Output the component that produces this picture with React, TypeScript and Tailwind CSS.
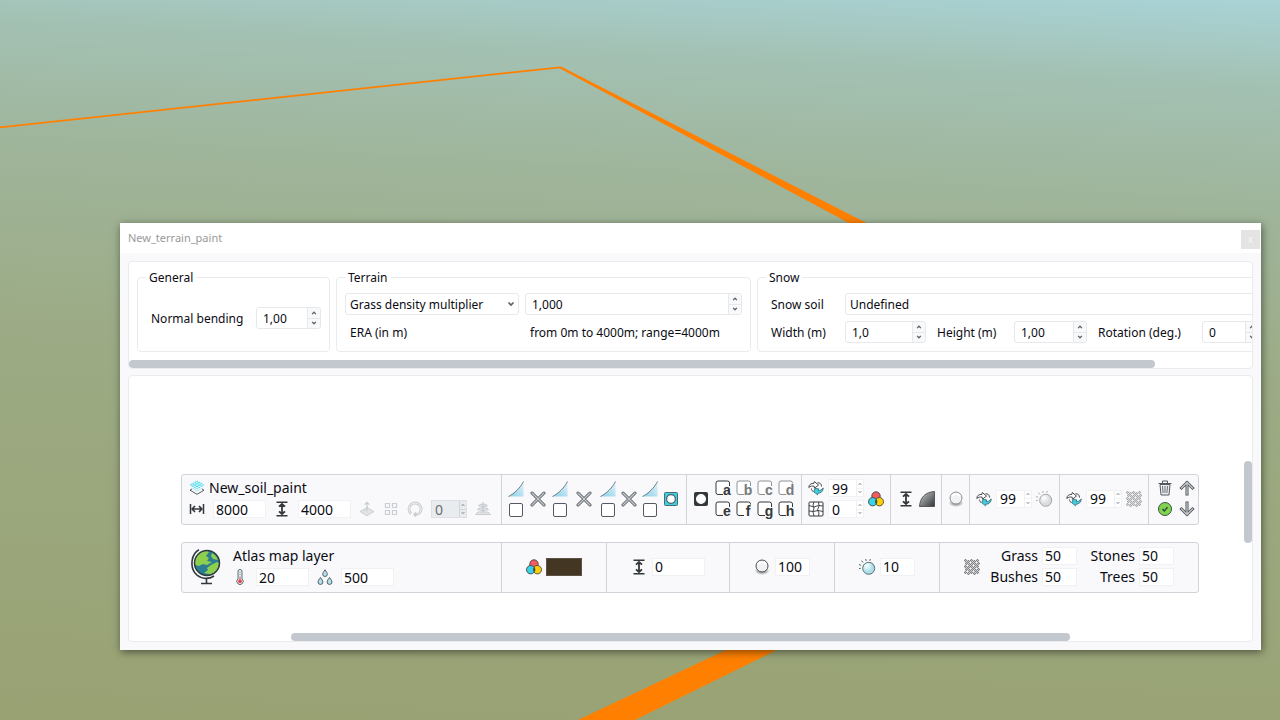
import type { ReactNode } from "react";
import clsx from "clsx";

function Icon({ size = 16, children, className }: { size?: number; children: ReactNode; className?: string }) {
  return (
    <svg width={size} height={size} viewBox="0 0 16 16" fill="none" aria-hidden="true" className={clsx("shrink-0", className)}>
      {children}
    </svg>
  );
}

function LayersIcon() {
  return (
    <Icon>
      <path d="M3 9 1 10.200 8 14.300l7-4.100L13 9" stroke="#43484c" strokeWidth=".9" />
      <path d="M8 1 15 5 8 9 1 5Z" fill="#c8f4f9" />
      <path d="M8 1 15 5 8 9 1 5ZM3.500 3.600l7 4M5.800 2.300l7 4M12.500 3.600l-7 4M10.200 2.300l-7 4" stroke="#3fd3e6" strokeWidth=".9" strokeDasharray="1.500 1" />
      <path d="m2.500 7.800 5.500 3.400 5.500-3.400" stroke="#8fdfe9" strokeWidth=".7" />
    </Icon>
  );
}

function WidthIcon() {
  return (
    <Icon>
      <path d="M1.500 3v10M14.500 3v10" stroke="#33383c" strokeWidth="1.500" />
      <path d="M3.500 8h9M6 5 3.200 8 6 11M10 5l2.800 3L10 11" stroke="#33383c" strokeWidth="1.700" />
    </Icon>
  );
}

function HeightIcon() {
  return (
    <Icon>
      <path d="M2.500 1.200h11M2.500 14.800h11" stroke="#33383c" strokeWidth="1.600" />
      <path d="M8 3v10M5 5.700 8 3l3 2.700M5 10.300 8 13l3-2.700" stroke="#33383c" strokeWidth="1.800" />
    </Icon>
  );
}

function RaiseIcon() {
  return (
    <Icon>
      <path d="M8 6.500 15 10.500 8 14.800 1 10.500Z" fill="#d8dbdf" stroke="#cdd1d5" />
      <path d="m3 9.500 7 4.200M5.500 8l7 4.200M13 9.500l-7 4.200M10.500 8l-7 4.200" stroke="#eceef0" strokeWidth=".6" />
      <path d="M8 10V1.500M5.800 3.600 8 1.400l2.200 2.200" stroke="#c6cace" strokeWidth="1.200" />
    </Icon>
  );
}

function TilesIcon() {
  return (
    <Icon>
      <path d="M2.500 2.500h4v4h-4zM9.500 2.500h4v4h-4zM2.500 9.500h4v4h-4zM9.500 9.500h4v4h-4z" stroke="#cbcfd3" strokeWidth="1.200" />
    </Icon>
  );
}

function RotateIcon() {
  return (
    <Icon>
      <path d="M4.300 12.700A6 6 0 1 1 11 13.200" stroke="#c9cdd1" strokeWidth="2.800" />
      <path d="M4.300 12.700A6 6 0 1 1 11 13.200" stroke="#f0f2f4" strokeWidth="1" />
      <path d="m6 13.200 3-2.700.4 2L12 13l-4 3z" fill="#c9cdd1" />
    </Icon>
  );
}

function StackIcon() {
  return (
    <Icon>
      <path d="M8 1v12" stroke="#c3c7cb" strokeWidth="1.200" />
      <path d="M5 3.300h6l1.500 1.500-4.500 1-4.500-1ZM4 7h8l1.500 1.500-5.500 1.200-5.500-1.200ZM3 11h10l2.500 2.500H.500Z" fill="#e4e7ea" stroke="#c3c7cb" strokeWidth=".9" />
      <path d="M8 3v9" stroke="#c3c7cb" />
    </Icon>
  );
}

function FalloffIcon() {
  return (
    <Icon>
      <defs>
        <linearGradient id="falloff" x1="0" x2="1" y1="1" y2="0">
          <stop offset=".2" stopColor="#9ad6ec" />
          <stop offset="1" stopColor="#e6f4fa" />
        </linearGradient>
      </defs>
      <path d="M.500 15.500C6.500 12.500 12.500 6.500 15.500.500v15z" fill="url(#falloff)" />
      <path d="M.500 15.500C6.500 12.500 12.500 6.500 15.500.500" stroke="#54616a" strokeWidth=".8" />
    </Icon>
  );
}

function CrossIcon() {
  return (
    <Icon>
      <path d="m2 2 12 12M14 2 2 14" stroke="#4c5156" strokeWidth="3" strokeLinecap="round" />
      <path d="m2 2 12 12M14 2 2 14" stroke="#c3c8cd" strokeWidth="1.500" strokeLinecap="round" />
    </Icon>
  );
}

function MaskIcon({ active }: { active?: boolean }) {
  return (
    <Icon>
      <rect x="1.500" y="1.500" width="13" height="13" rx="1" fill={active ? "#3ed0e0" : "#33383c"} stroke={active ? "#4a6b74" : "#33383c"} />
      <circle cx="8" cy="8" r="4.400" fill="#fff" stroke={active ? "#4f5d66" : "#fff"} strokeWidth="1.200" />
    </Icon>
  );
}

function LetterIcon({ letter, muted }: { letter: string; muted?: boolean }) {
  return (
    <Icon className="overflow-visible">
      <path d="M14.500 6V3a2 2 0 0 0-2-2H3a2 2 0 0 0-2 2v9.500a2 2 0 0 0 2 2h5" fill="#fff" stroke={muted ? "#8e9194" : "#33383c"} />
      <text
        x="12"
        y="14.500"
        textAnchor="middle"
        className="[font-family:'Liberation_Sans',sans-serif] text-[14px] font-bold [paint-order:stroke]"
        fill={muted ? "#77797b" : "#33383c"}
        stroke="#f9f9fb"
        strokeWidth="1"
      >
        {letter}
      </text>
    </Icon>
  );
}

function ShuffleIcon() {
  return (
    <Icon>
      <path d="M.800 7.500C1 4.500 3 3.200 5.800 3.500L6.300 1.500 10.500 5 6.500 8.200 6.200 6.200C4 5.800 2.500 6 .800 7.500Z" fill="#fff" stroke="#33383c" strokeWidth=".9" />
      <path d="M9.500 2.800c2.500-.3 4 1.200 4 3.700M3.500 8.500c0 1.700.6 2.600 2 3" stroke="#33383c" strokeWidth=".9" />
      <path d="M7 8.500 5.800 11.700 9.500 14.800 10 13.200c3 0 5-1.800 5.300-5.200L13 10c-1 .7-1.700.7-2.700.5L10.500 8.800Z" fill="#3ed0e0" stroke="#2f6570" strokeWidth=".8" />
    </Icon>
  );
}

function FractureIcon() {
  return (
    <Icon>
      <rect x="1" y="1" width="14" height="14" rx="1" fill="#fff" stroke="#33383c" />
      <path d="M1 4.500 6 6l4.500-1.500L15 5M1 10l4.500.5L10 9.500l5 1M6 1 5 4l1 3-1 4 1 4M10.500 1l.5 4-1.500 4 1.500 3-.5 3" stroke="#33383c" strokeWidth=".9" />
    </Icon>
  );
}

function ColorsIcon() {
  return (
    <Icon>
      <circle cx="8" cy="5" r="4.200" fill="#f45a5e" stroke="#41464a" strokeWidth=".9" />
      <circle cx="11.300" cy="10.700" r="4.200" fill="#ffd000" stroke="#41464a" strokeWidth=".9" />
      <circle cx="4.700" cy="10.700" r="4.200" fill="#39d3e8" stroke="#41464a" strokeWidth=".9" />
      <path d="M8 8.200a4 4 0 0 1 0 5 4 4 0 0 1 0-5Z" fill="#41464a" />
    </Icon>
  );
}

function CurveIcon() {
  return (
    <Icon>
      <defs>
        <linearGradient id="curve" x1="0" x2="1" y1="0" y2="1">
          <stop offset=".1" stopColor="#bfc1c3" />
          <stop offset="1" stopColor="#303336" />
        </linearGradient>
      </defs>
      <path d="M.500 15.500C1 6.500 6.500 1 15.500.500v15z" fill="url(#curve)" stroke="#4b4f53" strokeWidth=".9" />
    </Icon>
  );
}

function BallIcon({ muted }: { muted?: boolean }) {
  return (
    <Icon>
      <defs>
        <radialGradient id="ballShadow">
          <stop offset=".5" stopColor="#a9acae" />
          <stop offset="1" stopColor="#f9f9fb" />
        </radialGradient>
      </defs>
      <ellipse cx="8" cy="12" rx="7.500" ry="4" fill="url(#ballShadow)" />
      <circle cx="8" cy="7" r="6" fill="#f1f2f3" stroke={muted ? "#8f9396" : "#4b5054"} />
      <path d="M3.800 5.500a5 5 0 0 1 8.400 0" stroke="#fff" strokeWidth="1.500" />
    </Icon>
  );
}

function SunIcon({ muted }: { muted?: boolean }) {
  return (
    <Icon className="overflow-visible">
      <defs>
        <radialGradient id="sun" cx=".35" cy=".3">
          <stop offset="0" stopColor="#fff" />
          <stop offset="1" stopColor="#a9dde8" />
        </radialGradient>
        <radialGradient id="sunMuted" cx=".35" cy=".3">
          <stop offset="0" stopColor="#fff" />
          <stop offset="1" stopColor="#d9dbdd" />
        </radialGradient>
      </defs>
      <circle cx="9.700" cy="9.300" r="6" fill={muted ? "url(#sunMuted)" : "url(#sun)"} stroke={muted ? "#a2a5a8" : "#597078"} />
      <path
        d="m0 9.500 1.800-.2M0 5.500l2.200.8M2.500 1.700l1.600 1.800M6.700 0l.5 2M11.300 0l-.5 1.800"
        stroke={muted ? "#a2a5a8" : "#4b5054"}
        strokeWidth=".9"
      />
    </Icon>
  );
}

function NoiseIcon({ muted }: { muted?: boolean }) {
  return (
    <Icon>
      {[1.500, 4.500, 7.500, 10.500, 13.500].map((y, row) =>
        [1.500, 4.500, 7.500, 10.500, 13.500].map((x, column) => (
          <circle
            key={`${x}-${y}`}
            cx={x + (row % 2)}
            cy={y + (column % 2)}
            r=".9"
            fill="#fff"
            stroke={muted ? "#7b7e80" : "#3c3f41"}
            strokeWidth=".8"
          />
        ))
      )}
    </Icon>
  );
}

function TrashIcon() {
  return (
    <Icon>
      <path d="m3 4.500 1 10.500h8l1-10.500z" fill="#eceef0" stroke="#54595e" />
      <path d="M1.500 3.500h13M5.500 3V1h5v2" stroke="#54595e" />
      <path d="m5.500 6 .6 7M8 6v7M10.500 6l-.6 7" stroke="#6b7075" />
    </Icon>
  );
}

function CheckIcon() {
  return (
    <Icon>
      <circle cx="8" cy="8" r="6.500" fill="#7fd44f" stroke="#3f5243" />
      <path d="m5.500 8 1.800 2 3.200-3.800" stroke="#2f4536" strokeWidth="1.400" />
    </Icon>
  );
}

function ArrowIcon({ down }: { down?: boolean }) {
  return (
    <Icon className={clsx(down && "rotate-180")}>
      <path d="M8 14V3M2.500 8 8 2.500 13.500 8" stroke="#4b5055" strokeWidth="3" strokeLinecap="square" />
      <path d="M8 14V3M2.500 8 8 2.500 13.500 8" stroke="#c3c8cd" strokeWidth="1.300" strokeLinecap="square" />
    </Icon>
  );
}

function ThermometerIcon() {
  return (
    <Icon>
      <path d="M6 9.800V2.500a2 2 0 0 1 4 0v7.300a3.200 3.200 0 1 1-4 0Z" fill="#d9edf2" stroke="#5a5f63" strokeWidth=".9" />
      <circle cx="8" cy="12.300" r="1.900" fill="#e8474d" />
      <path d="M8 12V8" stroke="#e8474d" />
      <path d="M8 3v4.500" stroke="#7d8589" strokeWidth=".8" strokeDasharray="1 1" />
    </Icon>
  );
}

function DropsIcon() {
  return (
    <Icon>
      <path
        d="M8 .8C6.500 3 5.700 4 5.700 5.200a2.300 2.300 0 0 0 4.600 0C10.300 4 9.500 3 8 .8ZM3.500 8.500C2 10.700 1 11.700 1 13a2.400 2.400 0 0 0 4.900 0c0-1.300-.9-2.300-2.400-4.500ZM12.500 8.500c-1.500 2.200-2.400 3.200-2.400 4.500a2.400 2.400 0 0 0 4.900 0c0-1.300-1-2.300-2.500-4.500Z"
        fill="#b4dfea"
        stroke="#41535b"
        strokeWidth=".9"
      />
    </Icon>
  );
}

function GlobeIcon() {
  return (
    <svg width="32" height="36" viewBox="0 0 32 36" fill="none" aria-hidden="true" className="shrink-0">
      <circle cx="17" cy="14" r="12.500" fill="#2a7d93" />
      <path d="M5 12C6 5.500 11 2 17 2l2 1-3 4 3 2-2 3 5 1-5 3-4-1-4 2-4-1ZM22 4c3 1.500 5 4 6 7l-5-1-2-3ZM21 16l6-3 2 1c0 6-4 10-8 11.500L14 24l4-3-1-2Z" fill="#8ed04e" />
      <circle cx="17" cy="14" r="12.500" stroke="#2f3c42" strokeWidth="1.500" />
      <path d="M9 .8C1 5 0 17.500 5 24c5 6 13 7 19 3M16.500 29v5M11 34.500h11" stroke="#33383c" strokeWidth="1.600" />
    </svg>
  );
}

function Chevron({ up, size = 8 }: { up?: boolean; size?: number }) {
  return (
    <Icon size={size} className={clsx(up && "rotate-180")}>
      <path d="m3 5 5 5 5-5" stroke="#5f6266" strokeWidth="3.500" />
    </Icon>
  );
}

function SpinBox({ id, label, value, className }: { id: string; label?: string; value: string; className: string }) {
  return (
    <div className={clsx("flex h-[22px] shrink-0 overflow-hidden rounded-[3px] border border-[#e6e8eb] bg-white", className)}>
      <input id={id} aria-label={label} defaultValue={value} className="min-w-0 flex-1 bg-transparent pt-0.5 pl-1.5 outline-none" />
      <div className="flex w-[13px] flex-col divide-y divide-[#e6e8eb] border-l border-[#e6e8eb] bg-[#f8f9fa]">
        <button type="button" aria-label="Increase" className="flex flex-1 items-center justify-center">
          <Chevron up size={6} />
        </button>
        <button type="button" aria-label="Decrease" className="flex flex-1 items-center justify-center">
          <Chevron size={6} />
        </button>
      </div>
    </div>
  );
}

function MiniInput({ label, value, wide }: { label: string; value: string; wide?: boolean }) {
  return (
    <input
      aria-label={label}
      defaultValue={value}
      className={clsx("h-[18px] border border-[#f0f1f3] bg-white px-0.5 outline-none", wide ? "w-[53px]" : "w-[35px]")}
    />
  );
}

function MiniSpin({ label, value, disabled }: { label: string; value: string; disabled?: boolean }) {
  return (
    <div className={clsx("flex h-[18px] w-9 border", disabled ? "border-[#dcdfe3] bg-[#e9ecef] text-[#6a6d70]" : "border-[#f0f1f3] bg-white")}>
      <input aria-label={label} defaultValue={value} disabled={disabled} className="min-w-0 flex-1 bg-transparent pl-[3px] outline-none" />
      <div className={clsx("flex w-[7px] flex-col divide-y border-l", disabled ? "divide-[#d3d7db] border-[#d3d7db]" : "divide-[#f0f1f3] border-[#f0f1f3]")}>
        <button type="button" aria-label="Increase" disabled={disabled} className="flex flex-1 items-center justify-center">
          <Chevron up size={4} />
        </button>
        <button type="button" aria-label="Decrease" disabled={disabled} className="flex flex-1 items-center justify-center">
          <Chevron size={4} />
        </button>
      </div>
    </div>
  );
}

function IconButton({ label, disabled, children }: { label: string; disabled?: boolean; children: ReactNode }) {
  return (
    <button type="button" aria-label={label} disabled={disabled} className="flex shrink-0 items-center justify-center">
      {children}
    </button>
  );
}

function Group({ title, className, children }: { title: string; className: string; children: ReactNode }) {
  return (
    <fieldset className={clsx("shrink-0 rounded-[4px] border border-[#e9ebee] px-2 pb-2", className)}>
      <legend className="px-[3px] pt-0.5 leading-4">{title}</legend>
      <div className="pt-[7px]">{children}</div>
    </fieldset>
  );
}

function Cell({ className, children }: { className: string; children: ReactNode }) {
  return <div className={clsx("flex shrink-0 items-center border-l border-[#d0d3d7] pb-0.5", className)}>{children}</div>;
}

function FalloffPair({ label }: { label: string }) {
  return (
    <div className="flex flex-col items-center gap-[6px]">
      <IconButton label={`${label} falloff`}>
        <FalloffIcon />
      </IconButton>
      <input
        type="checkbox"
        aria-label={label}
        className="size-[14px] appearance-none rounded-[2px] border border-[#55595d] bg-white checked:bg-[#3ed0e0]"
      />
    </div>
  );
}

const masks = ["a", "b", "c", "d", "e", "f", "g", "h"];
const mutedMasks = ["b", "c", "d"];
const rowStyle = "flex h-[51px] rounded-[3px] border border-[#d0d3d7] bg-[#f9f9fb]";

function SettingsPanel() {
  return (
    <section className="overflow-hidden rounded-[4px] border border-[#e9ebee] bg-white text-[12px]">
      <div className="flex gap-[6px] px-2 pt-[6px] pb-2">
        <Group title="General" className="w-[193px]">
          <div className="flex h-[50px] items-center justify-between pl-[5px]">
            <label htmlFor="bending" className="pt-0.5">Normal bending</label>
            <SpinBox id="bending" value="1,00" className="w-[65px]" />
          </div>
        </Group>

        <Group title="Terrain" className="w-[415px]">
          <div className="grid grid-cols-[174px_1fr] items-center gap-[6px]">
            <div className="relative">
              <select aria-label="Terrain property" className="h-[22px] w-full appearance-none rounded-[3px] border border-[#e6e8eb] bg-white pt-0.5 pl-1 outline-none">
                <option>Grass density multiplier</option>
              </select>
              <span className="pointer-events-none absolute inset-y-0 right-1 flex items-center">
                <Chevron />
              </span>
            </div>
            <SpinBox id="density" label="Terrain property value" value="1,000" className="w-full" />
            <span className="h-[22px] pt-0.5 pl-[5px] leading-5">ERA (in m)</span>
            <span className="h-[22px] pt-0.5 pl-[5px] leading-5 whitespace-nowrap">from 0m to 4000m; range=4000m</span>
          </div>
        </Group>

        <Group title="Snow" className="w-[594px]">
          <div className="flex flex-col gap-[6px] pl-[5px]">
            <div className="flex items-center">
              <label htmlFor="snow-soil" className="w-[74px] pt-0.5">Snow soil</label>
              <select id="snow-soil" className="h-[22px] flex-1 appearance-none rounded-[3px] border border-[#e6e8eb] bg-white pt-0.5 pl-1 outline-none">
                <option>Undefined</option>
              </select>
            </div>
            <div className="flex items-center">
              <label htmlFor="snow-width" className="w-[74px] pt-0.5">Width (m)</label>
              <SpinBox id="snow-width" value="1,0" className="w-[81px]" />
              <label htmlFor="snow-height" className="ml-[11px] w-[77px] pt-0.5">Height (m)</label>
              <SpinBox id="snow-height" value="1,00" className="w-[73px]" />
              <label htmlFor="snow-rotation" className="ml-[11px] w-[104px] pt-0.5">Rotation (deg.)</label>
              <SpinBox id="snow-rotation" value="0" className="w-[57px]" />
            </div>
          </div>
        </Group>
      </div>
      <div className="h-2 w-[91.4%] rounded-full bg-[#c3c8ce]" />
    </section>
  );
}

function SoilRow() {
  return (
    <div className={rowStyle}>
      <div className="flex min-w-0 flex-1 flex-col justify-center gap-[3px] pb-0.5 pl-[7px]">
        <div className="flex h-[18px] items-center gap-1">
          <LayersIcon />
          <span className="leading-4">New_soil_paint</span>
        </div>
        <div className="flex items-center gap-2">
          <WidthIcon />
          <MiniInput label="Range" value="8000" wide />
          <HeightIcon />
          <MiniInput label="Height" value="4000" wide />
          <IconButton label="Raise" disabled><RaiseIcon /></IconButton>
          <IconButton label="Tiles" disabled><TilesIcon /></IconButton>
          <IconButton label="Rotate" disabled><RotateIcon /></IconButton>
          <MiniSpin label="Steps" value="0" disabled />
          <IconButton label="Stack" disabled><StackIcon /></IconButton>
        </div>
      </div>
      <Cell className="w-[185px] gap-2 pl-[6px]">
        <div className="flex items-center gap-[6px]">
          <FalloffPair label="Minimum slope" />
          <IconButton label="Remove slope"><CrossIcon /></IconButton>
          <FalloffPair label="Maximum slope" />
        </div>
        <IconButton label="Remove range"><CrossIcon /></IconButton>
        <div className="flex items-center gap-[5px]">
          <FalloffPair label="Minimum altitude" />
          <IconButton label="Remove altitude"><CrossIcon /></IconButton>
          <FalloffPair label="Maximum altitude" />
          <IconButton label="Invert mask"><MaskIcon active /></IconButton>
        </div>
      </Cell>
      <Cell className="w-[115px] gap-[6px] pl-[6px]">
        <IconButton label="Mask"><MaskIcon /></IconButton>
        <div className="grid grid-cols-4 gap-[5px]">
          {masks.map((m) => (
            <IconButton key={m} label={`Mask ${m}`}>
              <LetterIcon letter={m} muted={mutedMasks.includes(m)} />
            </IconButton>
          ))}
        </div>
      </Cell>
      <Cell className="w-[89px] gap-1 pl-[6px]">
        <div className="flex flex-col gap-[3px]">
          <div className="flex items-center gap-1">
            <ShuffleIcon />
            <MiniSpin label="Variation" value="99" />
          </div>
          <div className="flex items-center gap-1">
            <FractureIcon />
            <MiniSpin label="Fracture" value="0" />
          </div>
        </div>
        <IconButton label="Colors"><ColorsIcon /></IconButton>
      </Cell>
      <Cell className="w-[51px] justify-center gap-[5px]">
        <IconButton label="Relief"><HeightIcon /></IconButton>
        <IconButton label="Curve"><CurveIcon /></IconButton>
      </Cell>
      <Cell className="w-[28px] justify-center">
        <IconButton label="Roughness"><BallIcon muted /></IconButton>
      </Cell>
      <Cell className="w-[90px] gap-1 pl-[6px]">
        <ShuffleIcon />
        <MiniSpin label="Light variation" value="99" />
        <IconButton label="Light"><SunIcon muted /></IconButton>
      </Cell>
      <Cell className="w-[89px] gap-1 pl-[6px]">
        <ShuffleIcon />
        <MiniSpin label="Density variation" value="99" />
        <IconButton label="Density"><NoiseIcon muted /></IconButton>
      </Cell>
      <Cell className="w-[50px] justify-center pl-1">
        <div className="grid grid-cols-2 gap-x-[6px] gap-y-[5px]">
          <IconButton label="Delete layer"><TrashIcon /></IconButton>
          <IconButton label="Move up"><ArrowIcon /></IconButton>
          <IconButton label="Enable layer"><CheckIcon /></IconButton>
          <IconButton label="Move down"><ArrowIcon down /></IconButton>
        </div>
      </Cell>
    </div>
  );
}

function AtlasRow() {
  return (
    <div className={rowStyle}>
      <div className="flex min-w-0 flex-1 items-center gap-[10px] pb-0.5 pl-2">
        <GlobeIcon />
        <div className="flex flex-col gap-[3px]">
          <div className="h-[18px] pl-px leading-[18px]">Atlas map layer</div>
          <div className="flex items-center gap-2">
            <ThermometerIcon />
            <MiniInput label="Temperature" value="20" wide />
            <DropsIcon />
            <MiniInput label="Humidity" value="500" wide />
          </div>
        </div>
      </div>
      <Cell className="w-[105px] justify-center gap-1">
        <ColorsIcon />
        <button type="button" aria-label="Base color" className="h-[18px] w-9 border border-[#5b5446] bg-[#433723]" />
      </Cell>
      <Cell className="w-[123px] justify-center gap-[5px]">
        <HeightIcon />
        <MiniInput label="Relief" value="0" wide />
      </Cell>
      <Cell className="w-[105px] justify-center gap-[5px]">
        <BallIcon />
        <MiniInput label="Roughness" value="100" />
      </Cell>
      <Cell className="w-[105px] justify-center gap-[5px]">
        <SunIcon />
        <MiniInput label="Light" value="10" />
      </Cell>
      <Cell className="w-[259px] justify-center gap-[10px]">
        <NoiseIcon />
        <div className="grid grid-cols-[48px_35px_54px_35px] gap-x-1 gap-y-[3px] text-right leading-[18px] [&_input]:text-left">
          {["Grass", "Stones", "Bushes", "Trees"].map((name) => (
            <label key={name} className="contents">
              <span>{name}</span>
              <MiniInput label={name} value="50" />
            </label>
          ))}
        </div>
      </Cell>
    </div>
  );
}

export default function App() {
  return (
    <main className="relative min-h-screen overflow-hidden bg-[linear-gradient(183deg,#a9d3d7_0%,#a3c1b3_11%,#9fb59b_26%,#9cab85_50%,#9aa67b_75%,#99a273_100%)] pt-[223px] pr-[19px] pb-[70px] pl-[120px] text-[#0b0b14] [font-family:'Noto_Sans','Open_Sans',sans-serif]">
      <svg viewBox="0 0 1280 720" preserveAspectRatio="xMidYMid slice" aria-hidden="true" className="absolute inset-0 size-full">
        <path d="M0 126.500 560 66.500 560 68.200 0 128.200Z" fill="#ff8000" />
        <path d="M558 67.500 561 66.500 880 230 862 230Z" fill="#ff8000" />
        <path d="M578 720 747 640 797 640 635 720Z" fill="#ff8000" />
      </svg>

      <div className="relative bg-[#f9f9fb] shadow-[1px_2px_8px_rgba(0,0,0,0.5)]">
        <header className="flex h-[30px] items-center justify-between bg-white pl-2">
          <h1 className="text-[11px] text-[#999]">New_terrain_paint</h1>
          <button type="button" aria-label="Close" className="mt-0.5 mr-px flex size-[19px] items-center justify-center bg-[#e4e4e4] text-[10px] text-[#f4f4f4]">
            x
          </button>
        </header>

        <div className="flex flex-col gap-[6px] p-2">
          <SettingsPanel />
          <section className="relative rounded-[4px] border border-[#e9ebee] bg-white pt-[98px] text-[14px]">
            <div className="mr-[53px] ml-[52px] flex flex-col gap-[17px]">
              <SoilRow />
              <AtlasRow />
            </div>
            <div className="mt-10 ml-[14.4%] h-2 w-[69.4%] rounded-full bg-[#c3c8ce]" />
            <div className="absolute top-[32%] right-0 h-[31%] w-2 rounded-full bg-[#c3c8ce]" />
          </section>
        </div>
      </div>
    </main>
  );
}
